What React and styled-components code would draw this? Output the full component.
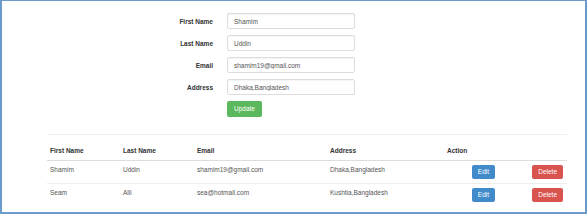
import React from 'react';
import styled, { createGlobalStyle } from 'styled-components';

const GlobalStyle = createGlobalStyle`
  html, body {
    margin: 0;
    padding: 0;
    background: #fff;
  }
  body {
    font-family: "Liberation Sans", Arial, sans-serif;
    color: #333;
  }
`;

const Frame = styled.div`
  box-sizing: border-box;
  width: 587px;
  height: 214px;
  border: 2px solid #6b9bc9;
  border-top-width: 1px;
  padding: 12px 18px 0 45px;
  overflow: hidden;
`;

const Form = styled.form`
  display: grid;
  grid-template-columns: 166px 128px;
  column-gap: 14px;
  row-gap: 6px;
  align-items: center;
  margin: 0;
`;

const Label = styled.label`
  font-size: 6.5px;
  font-weight: bold;
  text-align: right;
  color: #333;
`;

const Input = styled.input`
  box-sizing: border-box;
  width: 128px;
  height: 16px;
  padding: 0 6px;
  border: 1px solid #ddd;
  border-radius: 2px;
  box-shadow: inset 0 1px 1px rgba(0, 0, 0, 0.04);
  font-family: "Liberation Sans", Arial, sans-serif;
  font-size: 6.5px;
  color: #555;
  outline: none;
`;

const Button = styled.button`
  box-sizing: border-box;
  display: inline-block;
  vertical-align: top;
  height: ${(p) => p.$h || 16}px;
  padding: 0 ${(p) => p.$px || 6}px;
  border: none;
  border-radius: 2px;
  background: ${(p) => p.$bg};
  color: #fff;
  font-family: "Liberation Sans", Arial, sans-serif;
  font-size: 6.5px;
  line-height: ${(p) => p.$h || 16}px;
  cursor: pointer;
`;

const ButtonCell = styled.div`
  grid-column: 2;
  display: flex;
`;

const Divider = styled.hr`
  margin: 17px 0 0;
  border: none;
  border-top: 1px solid #eee;
`;

const Table = styled.table`
  width: 520px;
  border-collapse: collapse;
  font-size: 6.5px;
  line-height: 8px;
  table-layout: fixed;
`;

const HeadRow = styled.tr`
  height: 25px;
`;

const Row = styled.tr`
  height: 23px;
`;

const Th = styled.th`
  text-align: left;
  font-weight: bold;
  padding: 0 3px 5px;
  border-bottom: 1px solid #ddd;
  vertical-align: bottom;
`;

const Td = styled.td`
  padding: 5px 3px 0;
  color: #555;
  vertical-align: top;
  text-align: ${(p) => p.$align || 'left'};
  border-top: ${(p) => (p.$first ? 'none' : '1px solid #eee')};
`;

const ActionTd = styled(Td)`
  padding-top: 4px;
  padding-right: ${(p) => p.$pr || 3}px;
`;

const users = [
  { first: 'Shamim', last: 'Uddin', email: 'shamim19@gmail.com', address: 'Dhaka,Bangladesh' },
  { first: 'Seam', last: 'Alli', email: 'sea@hotmail.com', address: 'Kushtia,Bangladesh' },
];

const App = () => (
  <>
    <GlobalStyle />
    <Frame>
      <Form>
        <Label>First Name</Label>
        <Input defaultValue="Shamim" />
        <Label>Last Name</Label>
        <Input defaultValue="Uddin" />
        <Label>Email</Label>
        <Input defaultValue="shamim19@gmail.com" />
        <Label>Address</Label>
        <Input defaultValue="Dhaka,Bangladesh" />
        <ButtonCell>
          <Button type="button" $bg="#5cb85c" $px={7}>Update</Button>
        </ButtonCell>
      </Form>
      <Divider />
      <Table>
        <colgroup>
          <col style={{ width: 73 }} />
          <col style={{ width: 74 }} />
          <col style={{ width: 133 }} />
          <col style={{ width: 117 }} />
          <col style={{ width: 56 }} />
          <col style={{ width: 67 }} />
        </colgroup>
        <thead>
          <HeadRow>
            <Th>First Name</Th>
            <Th>Last Name</Th>
            <Th>Email</Th>
            <Th>Address</Th>
            <Th>Action</Th>
            <Th />
          </HeadRow>
        </thead>
        <tbody>
          {users.map((u, i) => (
            <Row key={u.email}>
              <Td $first={i === 0}>{u.first}</Td>
              <Td $first={i === 0}>{u.last}</Td>
              <Td $first={i === 0}>{u.email}</Td>
              <Td $first={i === 0}>{u.address}</Td>
              <ActionTd $first={i === 0} $align="right" $pr={5}>
                <Button type="button" $bg="#428bca" $h={14} $px={6}>Edit</Button>
              </ActionTd>
              <ActionTd $first={i === 0} $align="right" $pr={4}>
                <Button type="button" $bg="#d9534f" $h={14} $px={6}>Delete</Button>
              </ActionTd>
            </Row>
          ))}
        </tbody>
      </Table>
    </Frame>
  </>
);

export default App;
